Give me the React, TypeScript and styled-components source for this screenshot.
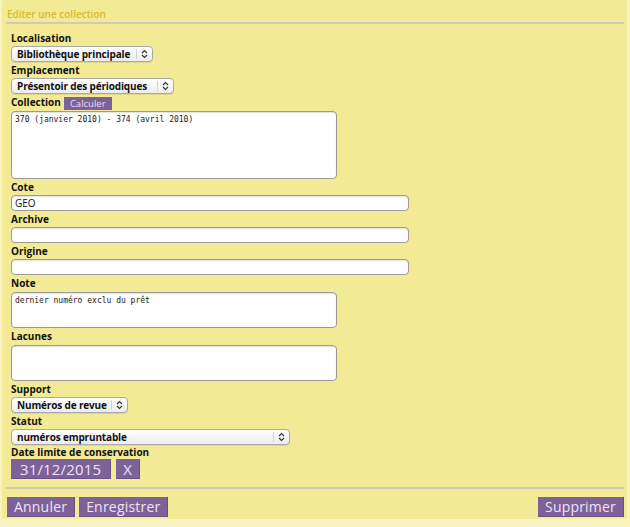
import React from "react";
import styled, { createGlobalStyle } from "styled-components";

const Global = createGlobalStyle`
  html, body { margin: 0; padding: 0; background: #f9f3c3; }
  body { font-family: "Open Sans", "DejaVu Sans", sans-serif; }
`;

const Panel = styled.div`
  width: 625px;
  height: 519px;
  margin-left: 2px;
  background: #f2ea94;
  box-sizing: border-box;
  padding: 0 3px 0 4px;
  display: flex;
  flex-direction: column;
`;

const Title = styled.div`
  height: 22px;
  line-height: 28px;
  padding-left: 1px;
  font-size: 10px;
  font-weight: 600;
  color: #d6bb2c;
`;

const Rule = styled.div`
  height: 2px;
  background: #cfcab8;
  margin: 0 0 6px 0;
`;

const Form = styled.div`
  display: flex;
  flex-direction: column;
  padding: 0 0 0 5px;
`;

const Label = styled.div<{ $h?: number }>`
  height: ${(p) => p.$h ?? 16}px;
  line-height: ${(p) => p.$h ?? 16}px;
  font-size: 10px;
  font-weight: 700;
  color: #111;
  display: flex;
  align-items: center;
  gap: 3px;
`;

const SmallButton = styled.span`
  display: inline-block;
  background: #7d6199;
  color: #e9def2;
  font-size: 9.5px;
  font-weight: 400;
  height: 13px;
  line-height: 13px;
  padding: 0 6px;
  margin-top: 2px;
`;

const SelectBox = styled.div<{ $w: number }>`
  width: ${(p) => p.$w}px;
  height: 16px;
  box-sizing: border-box;
  border: 1px solid #a9a9a9;
  border-radius: 4px;
  background: linear-gradient(#ffffff, #ededed);
  display: flex;
  align-items: stretch;
  box-shadow: 0 1px 0 rgba(0,0,0,0.08);
`;

const SelectText = styled.span`
  flex: 1;
  padding-left: 5px;
  font-size: 10px;
  letter-spacing: -0.15px;
  font-weight: 700;
  line-height: 14px;
  color: #111;
  white-space: nowrap;
  overflow: hidden;
`;

const SelectArrow = styled.span`
  width: 15px;
  border-left: 1px solid #d2d2d2;
  margin: 2px 0;
  display: flex;
  align-items: center;
  justify-content: center;
`;

const TextArea = styled.div<{ $h: number }>`
  width: 326px;
  height: ${(p) => p.$h}px;
  box-sizing: border-box;
  background: #fff;
  border: 1px solid #9a9a9a;
  border-radius: 4px;
  box-shadow: inset 0 1px 1px rgba(0,0,0,0.12);
  padding: 3px 3px;
  font-family: "DejaVu Sans Mono", monospace;
  font-size: 8px;
  line-height: 10px;
  color: #222;
  margin: 1px 0 0 0;
`;

const TextInput = styled.div`
  width: 398px;
  height: 16px;
  box-sizing: border-box;
  background: #fff;
  border: 1px solid #9a9a9a;
  border-radius: 4px;
  box-shadow: inset 0 1px 1px rgba(0,0,0,0.12);
  padding: 0 3px;
  font-size: 10px;
  line-height: 14px;
  color: #111;
`;

const Row = styled.div`
  display: flex;
  gap: 5px;
`;

const PurpleButton = styled.div<{ $px?: number; $fs?: number; $ls?: number }>`
  background: #7d6199;
  color: #eee4f5;
  font-size: ${(p) => p.$fs ?? 14}px;
  height: 20px;
  line-height: 20px;
  padding: 0 ${(p) => p.$px ?? 7}px;
  letter-spacing: ${(p) => p.$ls ?? 0.2}px;
  border-right: 1px solid #6a5185;
  border-bottom: 1px solid #6a5185;
  box-sizing: border-box;
`;

const Footer = styled.div`
  margin-top: 8px;
  border-top: 2px solid #cfcab8;
  padding: 8px 0 0 1px;
  display: flex;
  gap: 4px;
`;

const Spacer = styled.div`
  flex: 1;
`;

const Arrows = () => (
  <svg width="7" height="10" viewBox="0 0 7 10">
    <path d="M1 4 L3.5 1.5 L6 4" fill="none" stroke="#333" strokeWidth="1.1" />
    <path d="M1 6 L3.5 8.5 L6 6" fill="none" stroke="#333" strokeWidth="1.1" />
  </svg>
);

const Select = ({ w, children }: { w: number; children: React.ReactNode }) => (
  <SelectBox $w={w}>
    <SelectText>{children}</SelectText>
    <SelectArrow>
      <Arrows />
    </SelectArrow>
  </SelectBox>
);

export default function App() {
  return (
    <>
      <Global />
      <Panel>
        <Title>Editer une collection</Title>
        <Rule />
        <Form>
          <Label>Localisation</Label>
          <Select w={142}>Bibliothèque principale</Select>
          <Label>Emplacement</Label>
          <Select w={163}>Présentoir des périodiques</Select>
          <Label>
            Collection <SmallButton>Calculer</SmallButton>
          </Label>
          <TextArea $h={68}>370 (janvier 2010) - 374 (avril 2010)</TextArea>
          <Label>Cote</Label>
          <TextInput>GEO</TextInput>
          <Label>Archive</Label>
          <TextInput />
          <Label>Origine</Label>
          <TextInput />
          <Label>Note</Label>
          <TextArea $h={36}>dernier numéro exclu du prêt</TextArea>
          <Label>Lacunes</Label>
          <TextArea $h={36}></TextArea>
          <Label>Support</Label>
          <Select w={117}>Numéros de revue</Select>
          <Label>Statut</Label>
          <Select w={279}>numéros empruntable</Select>
          <Label $h={14}>Date limite de conservation</Label>
          <Row>
            <PurpleButton $fs={15} $ls={0.15} $px={9}>31/12/2015</PurpleButton>
            <PurpleButton $fs={15} $ls={0.15} $px={7}>X</PurpleButton>
          </Row>
        </Form>
        <Footer>
          <PurpleButton>Annuler</PurpleButton>
          <PurpleButton>Enregistrer</PurpleButton>
          <Spacer />
          <PurpleButton>Supprimer</PurpleButton>
        </Footer>
      </Panel>
    </>
  );
}
